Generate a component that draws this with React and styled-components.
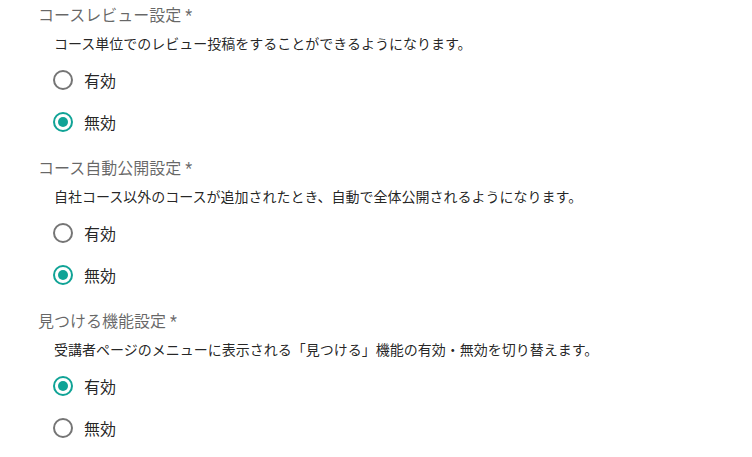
import { styled, createGlobalStyle } from "styled-components"

const GlobalStyle = createGlobalStyle`
    body {
        margin: 0;
        background: #ffffff;
        font-family: Roboto, "Noto Sans CJK JP", sans-serif;
    }
`

const Page = styled.div`
    display: flex;
    flex-direction: column;
    gap: 14px;
    padding: 4px 0 0 38px;
`
const Section = styled.fieldset`
    display: flex;
    flex-direction: column;
    border: 0;
    margin: 0;
    padding: 0;
`
const Legend = styled.div`
    font-size: 16px;
    line-height: 24px;
    color: rgba(0, 0, 0, 0.6);
`
const Description = styled.p`
    margin: 6px 0 5px 16px;
    font-size: 14px;
    line-height: 20px;
    color: rgba(0, 0, 0, 0.87);
`
const Group = styled.div`
    display: flex;
    flex-direction: column;
    padding-left: 15px;
`
const Option = styled.label`
    display: flex;
    align-items: center;
    gap: 11px;
    height: 42px;
    font-size: 16px;
    color: rgba(0, 0, 0, 0.87);
`
const Circle = styled.span`
    box-sizing: border-box;
    display: flex;
    align-items: center;
    justify-content: center;
    width: 20px;
    height: 20px;
    border-radius: 50%;
    border: 2px solid ${(props) => (props.checked ? "#10a396" : "#757575")};
    &::after {
        content: '';
        width: 10px;
        height: 10px;
        border-radius: 50%;
        background: ${(props) => (props.checked ? "#10a396" : "transparent")};
    }
`

const settings = [
    {
        title: "コースレビュー設定 *",
        text: "コース単位でのレビュー投稿をすることができるようになります。",
        value: "無効",
    },
    {
        title: "コース自動公開設定 *",
        text: "自社コース以外のコースが追加されたとき、自動で全体公開されるようになります。",
        value: "無効",
    },
    {
        title: "見つける機能設定 *",
        text: "受講者ページのメニューに表示される「見つける」機能の有効・無効を切り替えます。",
        value: "有効",
    },
]

export default function App() {
    return (
        <>
            <GlobalStyle />
            <Page>
                {settings.map((s) => (
                    <Section key={s.title}>
                        <Legend>{s.title}</Legend>
                        <Description>{s.text}</Description>
                        <Group>
                            {["有効", "無効"].map((opt) => (
                                <Option key={opt}>
                                    <Circle checked={s.value === opt} />
                                    {opt}
                                </Option>
                            ))}
                        </Group>
                    </Section>
                ))}
            </Page>
        </>
    )
}
